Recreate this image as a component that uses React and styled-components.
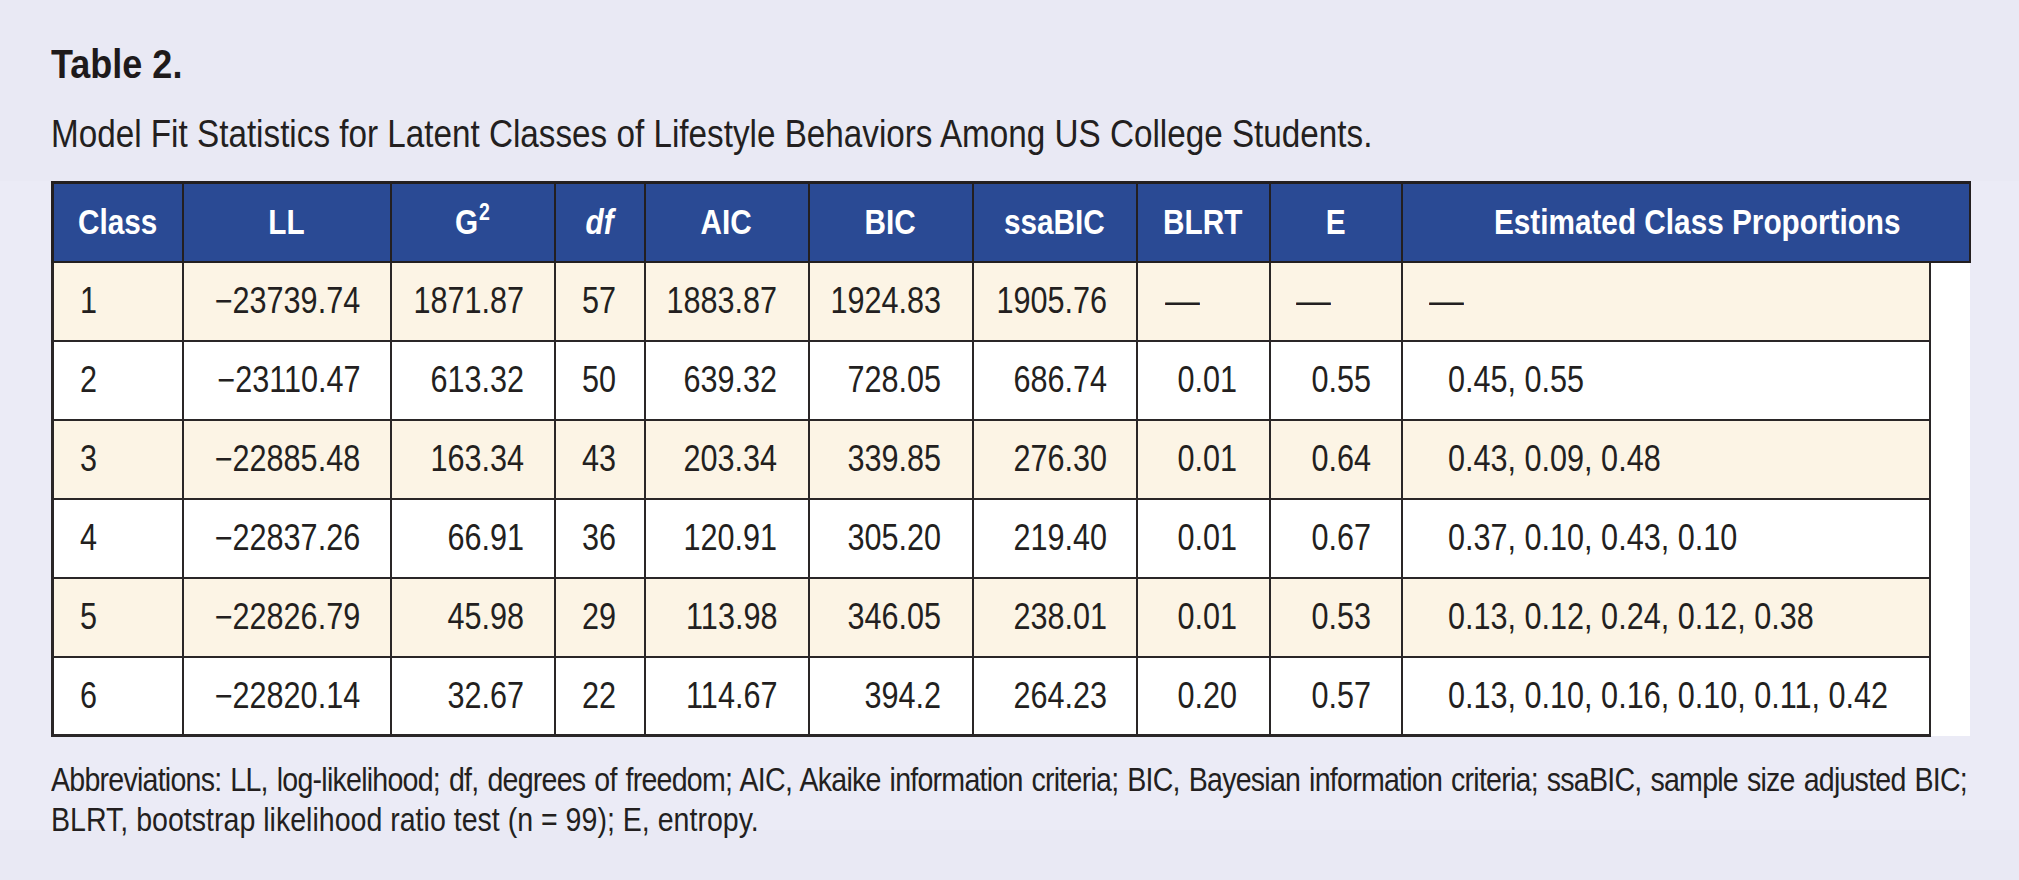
import React from "react";
import styled, { createGlobalStyle } from "styled-components";

// no condensed face is installed, so the narrow type of the original is
// made by squeezing Liberation Sans horizontally
const FONT = `"Liberation Sans", Arial, sans-serif`;

const GlobalStyle = createGlobalStyle`
    html, body {
        margin: 0;
        padding: 0;
        background: #e9e9f4;
    }
    body {
        font-family: ${FONT};
        color: #231f20;
    }
`;

const COLS = [130, 208, 164, 90, 164, 164, 164, 133, 132, 528, 40];

const rows = [
    ["1", "−23739.74", "1871.87", "57", "1883.87", "1924.83", "1905.76", "—", "—", "—"],
    ["2", "−23110.47", "613.32", "50", "639.32", "728.05", "686.74", "0.01", "0.55", "0.45, 0.55"],
    ["3", "−22885.48", "163.34", "43", "203.34", "339.85", "276.30", "0.01", "0.64", "0.43, 0.09, 0.48"],
    ["4", "−22837.26", "66.91", "36", "120.91", "305.20", "219.40", "0.01", "0.67", "0.37, 0.10, 0.43, 0.10"],
    ["5", "−22826.79", "45.98", "29", "113.98", "346.05", "238.01", "0.01", "0.53", "0.13, 0.12, 0.24, 0.12, 0.38"],
    ["6", "−22820.14", "32.67", "22", "114.67", "394.2", "264.23", "0.20", "0.57", "0.13, 0.10, 0.16, 0.10, 0.11, 0.42"],
];

// how each body column lines up: [align, padding]
const layout = [
    ["left", "0 0 0 26px"],
    ["right", "0 29px 0 0"],
    ["right", "0 29px 0 0"],
    ["center", "0"],
    ["right", "0 30px 0 0"],
    ["right", "0 30px 0 0"],
    ["right", "0 28px 0 0"],
    ["right", "0 31px 0 0"],
    ["right", "0 29px 0 0"],
    ["left", "0 0 0 45px"],
];

const dashPad = [0, 0, 0, 0, 0, 0, 0, 27, 25, 26];

const App = () => {
    return (
        <Page>
            <GlobalStyle />
            <Title>
                <Squeeze $x={0.9}>Table 2.</Squeeze>
            </Title>
            <Caption>
                <Squeeze $x={0.875}>
                    Model Fit Statistics for Latent Classes of Lifestyle Behaviors Among US College Students.
                </Squeeze>
            </Caption>
            <Section>
                <Table>
                    <colgroup>
                        {COLS.map((w, i) => (
                            <col key={i} style={{ width: w }} />
                        ))}
                    </colgroup>
                    <thead>
                        <tr>
                            <HeadCell $first>
                                <Squeeze $origin="center">Class</Squeeze>
                            </HeadCell>
                            <HeadCell>
                                <Squeeze $origin="center">LL</Squeeze>
                            </HeadCell>
                            <HeadCell>
                                <Squeeze $origin="center">
                                    G<Sup>2</Sup>
                                </Squeeze>
                            </HeadCell>
                            <HeadCell>
                                <Squeeze $origin="center">
                                    <em>df</em>
                                </Squeeze>
                            </HeadCell>
                            <HeadCell>
                                <Squeeze $origin="center">AIC</Squeeze>
                            </HeadCell>
                            <HeadCell>
                                <Squeeze $origin="center">BIC</Squeeze>
                            </HeadCell>
                            <HeadCell>
                                <Squeeze $origin="center">ssaBIC</Squeeze>
                            </HeadCell>
                            <HeadCell>
                                <Squeeze $origin="center">BLRT</Squeeze>
                            </HeadCell>
                            <HeadCell>
                                <Squeeze $origin="center">E</Squeeze>
                            </HeadCell>
                            <HeadCell colSpan={2} $last>
                                <Squeeze $origin="center">Estimated Class Proportions</Squeeze>
                            </HeadCell>
                        </tr>
                    </thead>
                    <tbody>
                        {rows.map((row, r) => (
                            <tr key={r}>
                                {row.map((value, c) => {
                                    const dash = value === "—";
                                    const align = dash ? "left" : layout[c][0];
                                    return (
                                        <Cell
                                            key={c}
                                            $shade={r % 2 === 0}
                                            $first={c === 0}
                                            $bottom={r === rows.length - 1}
                                            $align={align}
                                            $pad={dash ? `0 0 0 ${dashPad[c]}px` : layout[c][1]}
                                        >
                                            <Squeeze $origin={align} $x={dash ? 0.97 : 0.85}>
                                                {value}
                                            </Squeeze>
                                        </Cell>
                                    );
                                })}
                                <Gutter />
                            </tr>
                        ))}
                    </tbody>
                </Table>
                <Notes>
                    <NoteLine $justify>
                        Abbreviations: LL, log-likelihood; df, degrees of freedom; AIC, Akaike information criteria; BIC, Bayesian information criteria; ssaBIC, sample size adjusted BIC;
                    </NoteLine>
                    <NoteLine>BLRT, bootstrap likelihood ratio test (n = 99); E, entropy.</NoteLine>
                </Notes>
            </Section>
        </Page>
    );
};

export default App;

const Page = styled.div`
    width: 2019px;
    height: 880px;
    padding-top: 40px;
    box-sizing: border-box;
    overflow: hidden;
    background: #e9e9f4;
`;

const Squeeze = styled.span`
    display: inline-block;
    white-space: nowrap;
    transform: scaleX(${(p) => p.$x || 0.85});
    transform-origin: ${(p) => p.$origin || "left"} center;
`;

const Title = styled.div`
    margin-left: 51px;
    font-size: 40px;
    line-height: 48px;
    font-weight: bold;
    color: #1e1a1b;
`;

const Caption = styled.div`
    margin-left: 51px;
    margin-top: 23px;
    font-size: 38px;
    line-height: 46px;
    color: #231f20;
`;

const Section = styled.div`
    margin-top: 24px;
    height: 649px;
    background: #ebebf6;
    padding-left: 51px;
`;

const Table = styled.table`
    border-collapse: collapse;
    table-layout: fixed;
    width: 1917px;
    font-family: ${FONT};
`;

const HeadCell = styled.th`
    height: 79px;
    padding: ${(p) => (p.$last ? "0 0 0 24px" : "0")};
    box-sizing: border-box;
    background: #2a4a94;
    color: #ffffff;
    font-size: 35px;
    font-weight: bold;
    text-align: center;
    vertical-align: middle;
    white-space: nowrap;
    border-top: 3px solid #231f20;
    border-bottom: 2px solid #231f20;
    border-left: ${(p) => (p.$first ? "3px" : "2px")} solid #231f20;
    border-right: 2px solid #231f20;

    em {
        font-style: italic;
    }
`;

const Sup = styled.sup`
    font-size: 23px;
    line-height: 0;
    vertical-align: 14px;
    margin-left: 1px;
`;

const Cell = styled.td`
    height: 79px;
    box-sizing: border-box;
    padding: ${(p) => p.$pad};
    text-align: ${(p) => p.$align};
    vertical-align: middle;
    white-space: nowrap;
    font-size: 36px;
    color: #231f20;
    background: ${(p) => (p.$shade ? "#fcf4e5" : "#ffffff")};
    border: 2px solid #2a2627;
    border-left-width: ${(p) => (p.$first ? "3px" : "2px")};
    border-bottom-width: ${(p) => (p.$bottom ? "3px" : "2px")};
`;

const Gutter = styled.td`
    background: #ffffff;
    border: none;
    padding: 0;
`;

const Notes = styled.div`
    margin-top: 22px;
    font-size: 34px;
    line-height: 40px;
    color: #231f20;
`;

// the first line is set full width, as in the printed table
const NoteLine = styled.div`
    width: ${(p) => (p.$justify ? `${Math.round(1916 / 0.84)}px` : "auto")};
    white-space: ${(p) => (p.$justify ? "normal" : "nowrap")};
    text-align: ${(p) => (p.$justify ? "justify" : "left")};
    text-align-last: ${(p) => (p.$justify ? "justify" : "left")};
    letter-spacing: ${(p) => (p.$justify ? "-0.9px" : "0")};
    transform: scaleX(0.84);
    transform-origin: left center;
`;
